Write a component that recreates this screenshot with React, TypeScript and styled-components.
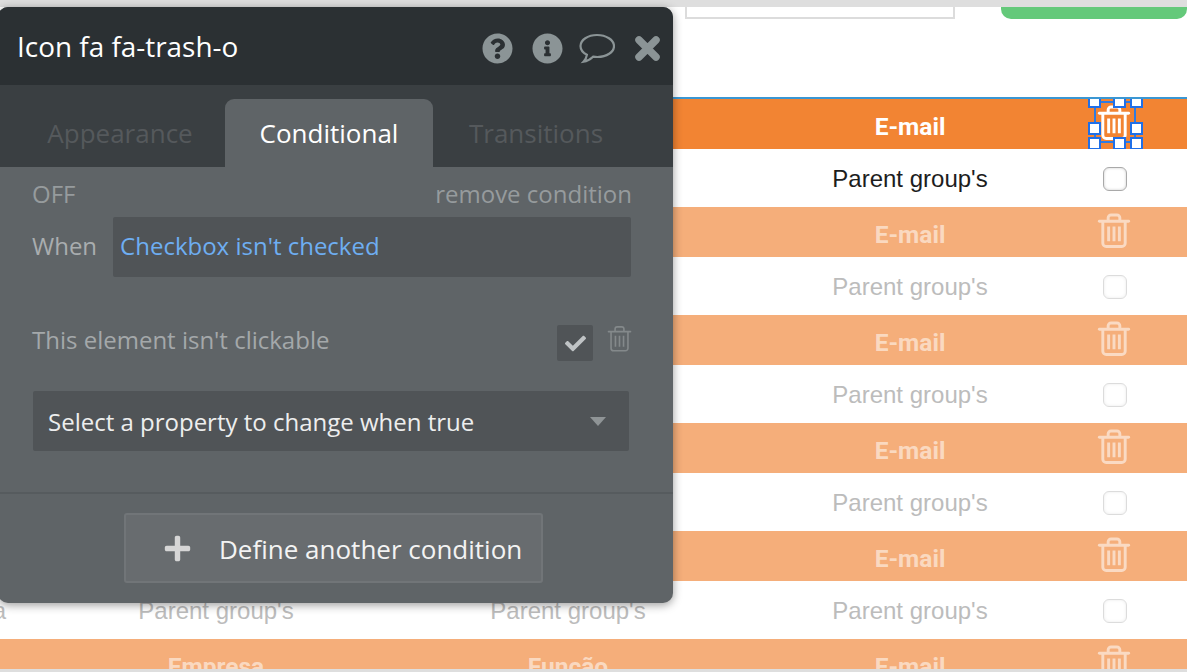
import React from "react";
import styled, { createGlobalStyle } from "styled-components";
import {
  FaCheck,
  FaInfoCircle,
  FaPlus,
  FaQuestionCircle,
} from "react-icons/fa";

const GlobalStyle = createGlobalStyle`
  html, body {
    margin: 0;
    padding: 0;
    background: #fff;
  }
`;

const Page = styled.div`
  position: relative;
  display: flex;
  flex-direction: column;
  width: 1187px;
  height: 672px;
  overflow: hidden;
  background: #fff;
`;

const BrowserEdge = styled.div<{ $height: number }>`
  flex: none;
  height: ${(props) => props.$height}px;
  background: #dedede;
  position: relative;
  z-index: 1;
`;

const Toolbar = styled.div`
  flex: none;
  height: 90px;
  display: flex;
  align-items: flex-start;
  gap: 46px;
  padding-left: 685px;
`;

const SearchInput = styled.div`
  width: 270px;
  height: 12px;
  box-sizing: border-box;
  border: 2px solid #dcdcdc;
  border-top: none;
`;

const GreenButton = styled.div`
  flex: 1;
  height: 12px;
  background: #64c97a;
  border-radius: 0 0 10px 10px;
`;

const Table = styled.div`
  flex: 1;
  min-height: 0;
  overflow: hidden;
  border-top: 2px solid #3b97d3;
`;

const Row = styled.div<{ $kind: "active" | "faded" }>`
  display: grid;
  grid-template-columns: 40px 352px 352px 332px 78px 33px;
  align-items: center;
  overflow: hidden;
`;

const HeadRow = styled(Row)`
  height: 50px;
  box-sizing: border-box;
  background: ${(props) => (props.$kind === "active" ? "#f28433" : "#f5ae7a")};
  color: ${(props) =>
    props.$kind === "active" ? "#fff" : "rgba(255, 255, 255, 0.55)"};
  font: 700 24.5px Roboto, sans-serif;
`;

const BodyRow = styled(Row)`
  height: 58px;
  background: #fff;
  color: ${(props) => (props.$kind === "active" ? "#1d1d1d" : "#bcbcbc")};
  font: 400 24px "Liberation Sans", Arial, sans-serif;
`;

const Cell = styled.div<{ $offset: number }>`
  text-align: center;
  white-space: nowrap;
  padding-top: ${(props) => props.$offset}px;
`;

const CutOffCell = styled.div`
  display: flex;
  justify-content: flex-end;
  padding: 2px 34px 0 0;
`;

const IconCell = styled.div`
  position: relative;
  display: flex;
  justify-content: center;
  align-items: center;
  height: 100%;
`;

const RowTrash = styled.svg<{ $faded: boolean }>`
  width: 34px;
  height: 36px;
  margin: 0 2px 2px 0;
  fill: none;
  stroke: #fff;
  stroke-width: 3;
  opacity: ${(props) => (props.$faded ? 0.55 : 1)};
`;

const Checkbox = styled.div<{ $faded: boolean }>`
  width: 24px;
  height: 24px;
  margin-top: 2px;
  box-sizing: border-box;
  border: 1.5px solid #a9a9a9;
  border-radius: 6px;
  background: #fff;
  box-shadow: inset 0 0 3px rgba(0, 0, 0, 0.2);
  opacity: ${(props) => (props.$faded ? 0.4 : 1)};
`;

const SelectionFrame = styled.div`
  position: absolute;
  left: 18px;
  top: 2px;
  width: 42px;
  height: 42px;
  border: 2px solid #2f7be0;
  box-sizing: border-box;
`;

const Handle = styled.span<{ $x: number; $y: number }>`
  position: absolute;
  left: ${(props) => props.$x}px;
  top: ${(props) => props.$y}px;
  width: 13px;
  height: 13px;
  box-sizing: border-box;
  background: #fff;
  border: 2px solid #1f6fe8;
`;

const Panel = styled.div`
  position: absolute;
  left: -2px;
  top: 7px;
  width: 675px;
  height: 596px;
  display: flex;
  flex-direction: column;
  background: #5f6467;
  border-radius: 10px;
  box-shadow: 0 2px 10px rgba(0, 0, 0, 0.4);
  overflow: hidden;
  font-family: "Open Sans", sans-serif;
  z-index: 2;
`;

const PanelHeader = styled.div`
  flex: none;
  height: 78px;
  display: flex;
  align-items: center;
  padding: 0 1px 0 19px;
  background: #2b3033;
`;

const PanelTitle = styled.div`
  flex: 1;
  font-size: 27.9px;
  color: #fff;
`;

const HeaderIcon = styled.div`
  width: 50px;
  padding-top: 4px;
  display: flex;
  justify-content: center;
  align-items: center;
  color: #8b9496;
`;

const CommentGlyph = styled.svg`
  width: 36px;
  height: 31px;
  fill: none;
  stroke: #8b9496;
  stroke-width: 2.2;
`;

const CloseGlyph = styled.svg`
  width: 27px;
  height: 27px;
  stroke: #8b9496;
  stroke-width: 7.5;
  stroke-linecap: round;
`;

const TabBar = styled.div`
  flex: none;
  height: 82px;
  box-sizing: border-box;
  padding: 14px 0 0 17px;
  display: grid;
  grid-template-columns: 210px 208px 206px;
  background: #3a3f42;
`;

const Tab = styled.div<{ $active?: boolean }>`
  display: flex;
  justify-content: center;
  align-items: center;
  font-size: 26px;
  border-radius: 9px 9px 0 0;
  color: ${(props) => (props.$active ? "#fff" : "#55595c")};
  background: ${(props) => (props.$active ? "#5f6467" : "transparent")};
`;

const PanelBody = styled.div`
  flex: 1;
  display: flex;
  flex-direction: column;
  padding: 14px 41px 0 34px;
  font-size: 24px;
`;

const ConditionTop = styled.div`
  height: 28px;
  padding-bottom: 4px;
  box-sizing: border-box;
  display: flex;
  justify-content: space-between;
  align-items: center;
  color: #969b9d;
`;

const WhenRow = styled.div`
  margin-top: 8px;
  height: 60px;
  display: flex;
  align-items: center;
  gap: 16px;
  color: #a9adaf;
`;

const WhenLabel = styled.span`
  padding-bottom: 4px;
`;

const ExpressionBox = styled.div`
  flex: 1;
  height: 100%;
  box-sizing: border-box;
  display: flex;
  align-items: center;
  padding: 0 0 4px 7px;
  margin-right: 1px;
  background: #505457;
  border-radius: 2px;
  color: #6eaef2;
`;

const ClickableRow = styled.div`
  margin-top: 48px;
  height: 36px;
  display: flex;
  align-items: center;
  color: #a4a8aa;
`;

const ClickableLabel = styled.div`
  flex: 1;
  padding-bottom: 8px;
`;

const CheckTile = styled.div`
  width: 36px;
  height: 36px;
  display: flex;
  justify-content: center;
  align-items: center;
  background: #505457;
  border-radius: 2px;
  color: #bfc3c5;
`;

const PanelTrash = styled.svg`
  width: 25px;
  height: 28px;
  margin: 0 0 8px 14px;
  fill: none;
  stroke: #84898b;
  stroke-width: 2.2;
`;

const PropertySelect = styled.div`
  margin: 30px 3px 0 1px;
  height: 60px;
  display: flex;
  justify-content: space-between;
  align-items: center;
  padding: 0 23px 0 15px;
  background: #505457;
  border-radius: 2px;
  color: #edeeee;
`;

const Caret = styled.span`
  width: 0;
  height: 0;
  border-left: 8.5px solid transparent;
  border-right: 8.5px solid transparent;
  border-top: 9px solid #8f9496;
`;

const PanelFooter = styled.div`
  flex: none;
  height: 111px;
  box-sizing: border-box;
  padding: 19px 0 0 126px;
  border-top: 2px solid #565b5e;
`;

const DefineButton = styled.div`
  width: 419px;
  height: 70px;
  box-sizing: border-box;
  display: flex;
  align-items: center;
  gap: 27px;
  padding-left: 37px;
  background: #686c6f;
  border: 2px solid #717578;
  border-radius: 3px;
  font-size: 26px;
  color: #f3f3f3;
`;

const DefineLabel = styled.span`
  padding-top: 2px;
`;

const PlusIcon = styled.div`
  display: flex;
  color: #d6d6d6;
`;

function TrashShape() {
  return (
    <>
      <path d="M2 8.5h30" strokeLinecap="round" />
      <path d="M11 8V5a3 3 0 0 1 3-3h6a3 3 0 0 1 3 3v3" />
      <path d="M5.5 9v22a3.5 3.5 0 0 0 3.5 3.5h16a3.5 3.5 0 0 0 3.5-3.5V9" />
      <path d="M11.5 14v15M17 14v15M22.5 14v15" />
    </>
  );
}

function Selection() {
  const handles = [
    [12, -4],
    [37, -4],
    [54, -4],
    [12, 23],
    [54, 23],
    [12, 38],
    [37, 38],
    [54, 38],
  ];
  return (
    <>
      <SelectionFrame />
      {handles.map(([x, y]) => (
        <Handle key={`${x}-${y}`} $x={x} $y={y} />
      ))}
    </>
  );
}

const rowCount = 5;

export default function App() {
  return (
    <Page>
      <GlobalStyle />
      <BrowserEdge $height={7} />
      <Toolbar>
        <SearchInput />
        <GreenButton />
      </Toolbar>
      <Table>
        {Array.from({ length: rowCount + 1 }).map((_, i) => {
          const kind = i === 0 ? "active" : "faded";
          return (
            <React.Fragment key={i}>
              <HeadRow $kind={kind}>
                <span />
                <Cell $offset={4}>Empresa</Cell>
                <Cell $offset={4}>Função</Cell>
                <Cell $offset={4}>E-mail</Cell>
                <IconCell>
                  <RowTrash viewBox="0 0 34 37" $faded={i > 0}>
                    <TrashShape />
                  </RowTrash>
                  {i === 0 && <Selection />}
                </IconCell>
              </HeadRow>
              {i < rowCount && (
                <BodyRow $kind={kind}>
                  <CutOffCell>a</CutOffCell>
                  <Cell $offset={2}>Parent group's</Cell>
                  <Cell $offset={2}>Parent group's</Cell>
                  <Cell $offset={2}>Parent group's</Cell>
                  <IconCell>
                    <Checkbox $faded={i > 0} />
                  </IconCell>
                </BodyRow>
              )}
            </React.Fragment>
          );
        })}
      </Table>
      <BrowserEdge $height={3} />
      <Panel>
        <PanelHeader>
          <PanelTitle>Icon fa fa-trash-o</PanelTitle>
          <HeaderIcon>
            <FaQuestionCircle size={31} />
          </HeaderIcon>
          <HeaderIcon>
            <FaInfoCircle size={31} />
          </HeaderIcon>
          <HeaderIcon>
            <CommentGlyph viewBox="0 0 36 30">
              <path d="M18 1.5C8.8 1.5 1.5 6.4 1.5 12.5c0 3.6 2.5 6.8 6.4 8.8-.4 2.6-1.8 5.2-3.4 6.9 3.4-.5 7.2-2.7 9.6-5 1.4.2 2.8.3 4.4.3 9.2 0 16.5-5 16.5-11S27.2 1.5 18 1.5z" />
            </CommentGlyph>
          </HeaderIcon>
          <HeaderIcon>
            <CloseGlyph viewBox="0 0 27 27">
              <path d="M5 5l17 17M22 5L5 22" />
            </CloseGlyph>
          </HeaderIcon>
        </PanelHeader>
        <TabBar>
          <Tab>Appearance</Tab>
          <Tab $active>Conditional</Tab>
          <Tab>Transitions</Tab>
        </TabBar>
        <PanelBody>
          <ConditionTop>
            <span>OFF</span>
            <span>remove condition</span>
          </ConditionTop>
          <WhenRow>
            <WhenLabel>When</WhenLabel>
            <ExpressionBox>Checkbox isn't checked</ExpressionBox>
          </WhenRow>
          <ClickableRow>
            <ClickableLabel>This element isn't clickable</ClickableLabel>
            <CheckTile>
              <FaCheck size={21} />
            </CheckTile>
            <PanelTrash viewBox="0 0 34 37">
              <TrashShape />
            </PanelTrash>
          </ClickableRow>
          <PropertySelect>
            <span>Select a property to change when true</span>
            <Caret />
          </PropertySelect>
        </PanelBody>
        <PanelFooter>
          <DefineButton>
            <PlusIcon>
              <FaPlus size={29} />
            </PlusIcon>
            <DefineLabel>Define another condition</DefineLabel>
          </DefineButton>
        </PanelFooter>
      </Panel>
    </Page>
  );
}
